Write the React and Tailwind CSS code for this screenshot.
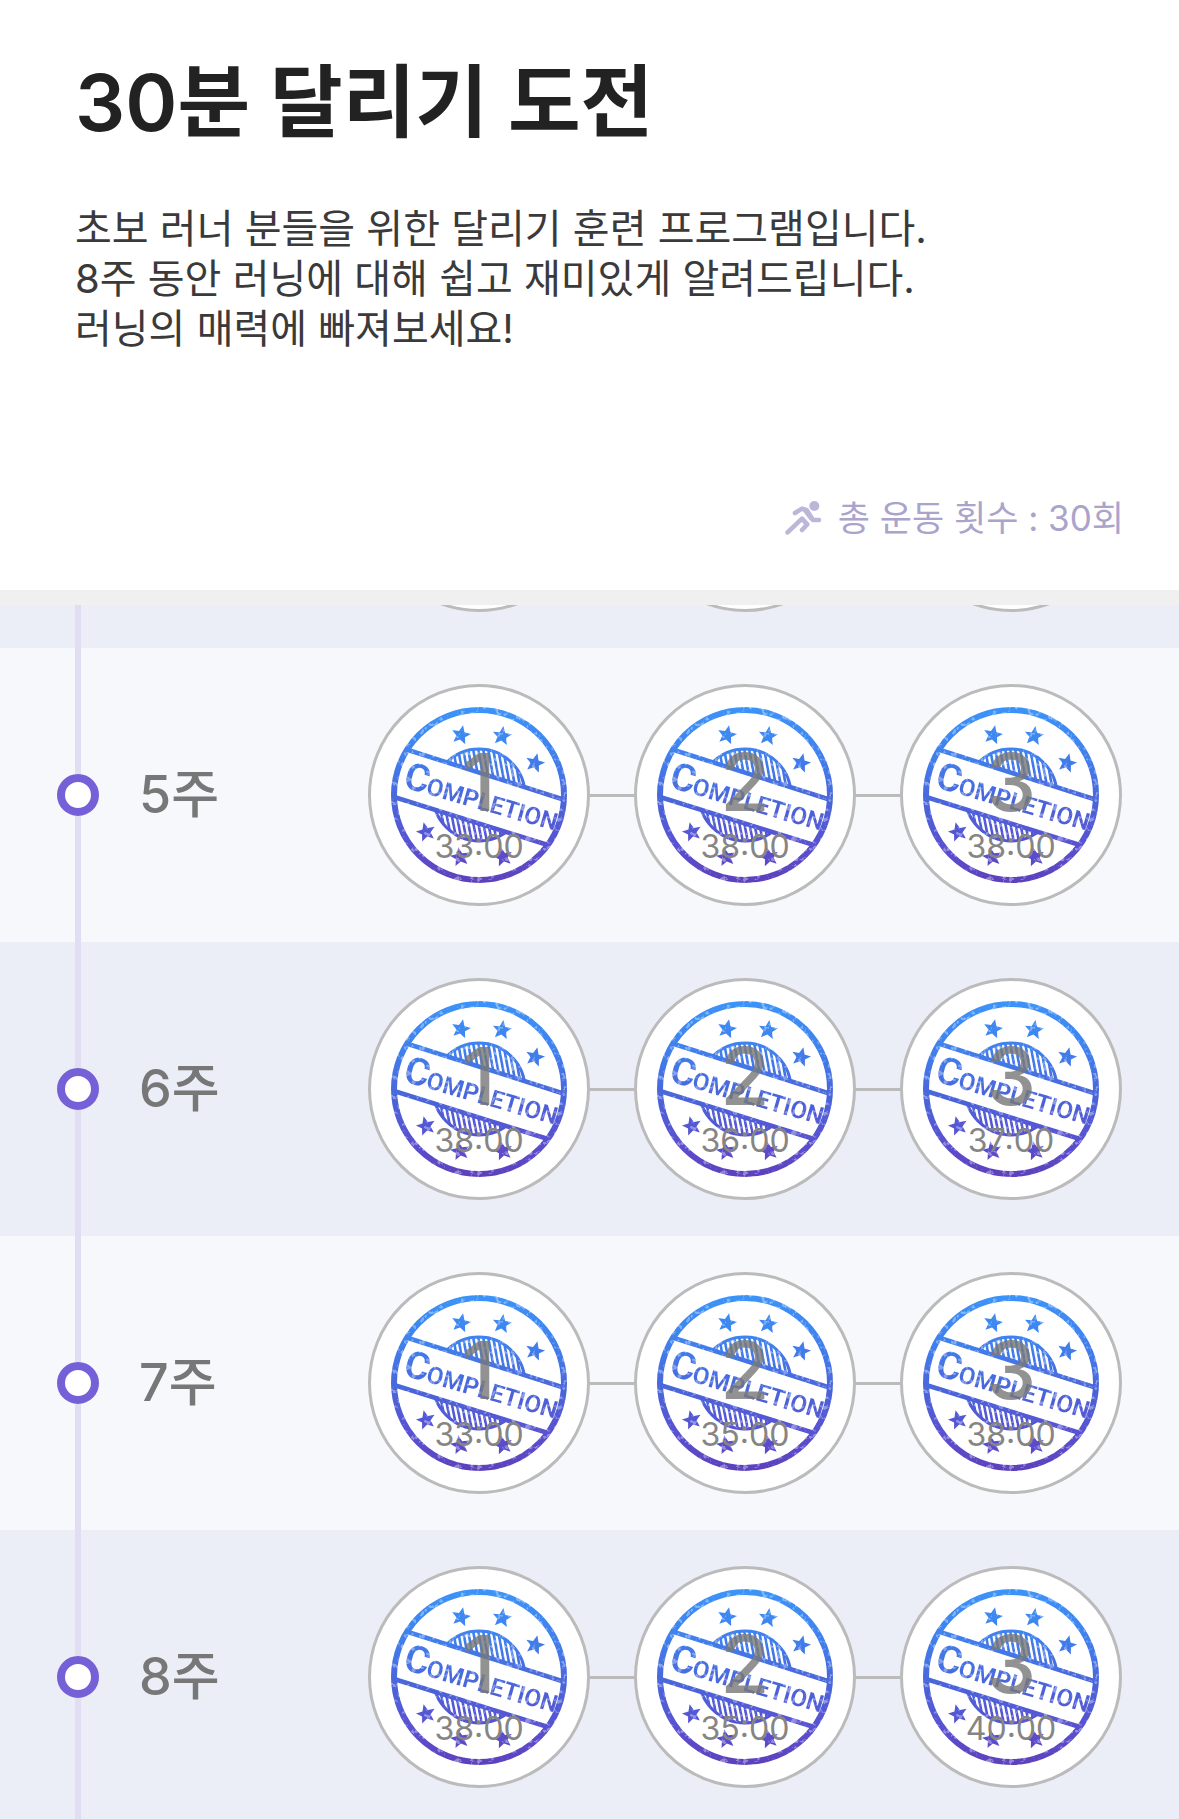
const weeks = [
  { week: 5, times: ['33:00', '38:00', '38:00'] },
  { week: 6, times: ['38:00', '36:00', '37:00'] },
  { week: 7, times: ['33:00', '35:00', '38:00'] },
  { week: 8, times: ['38:00', '35:00', '40:00'] },
];

const STAR = 'M0 -10 L2.8 -3.4 L9.6 -3 L4.4 1.4 L6 8.2 L0 4.6 L-6 8.2 L-4.4 1.4 L-9.6 -3 L-2.8 -3.4 Z';
const stars = [
  [70, 28, 12], [111, 29, 8], [144, 56, 14],
  [35, 125, -14], [69, 150, -10], [112, 150, -12],
];
const hatch = Array.from({ length: 20 }, (_, i) => 40 + i * 5);

function StampDefs() {
  return (
    <svg className="absolute h-0 w-0" aria-hidden="true">
      <defs>
        <linearGradient id="ink" gradientUnits="userSpaceOnUse" x1="0" y1="0" x2="0" y2="176">
          <stop offset="0" stopColor="#3b93f8" />
          <stop offset="0.25" stopColor="#3f82ee" />
          <stop offset="0.55" stopColor="#4a64da" />
          <stop offset="0.8" stopColor="#5a50d0" />
          <stop offset="1" stopColor="#5c40bc" />
        </linearGradient>
        <filter id="soften" x="0" y="0" width="1" height="1">
          <feGaussianBlur stdDeviation="0.7" />
        </filter>
        <filter id="wear" x="0" y="0" width="1" height="1">
          <feTurbulence type="fractalNoise" baseFrequency="0.2" numOctaves="3" seed="11" />
          <feColorMatrix values="0 0 0 0 0  0 0 0 0 0  0 0 0 0 0  8 0 0 0 -4.6" />
        </filter>
        <clipPath id="above"><path d="M0 37 L176 94 L176 0 L0 0Z" /></clipPath>
        <clipPath id="below"><path d="M0 89 L176 143 L176 176 L0 176Z" /></clipPath>
        <clipPath id="core"><circle cx="88" cy="88" r="46" /></clipPath>
        <mask id="inkMask" maskUnits="userSpaceOnUse" x="0" y="0" width="176" height="176">
          <g fill="none" stroke="white" strokeWidth="4.5">
            <circle cx="88" cy="88" r="85" strokeWidth="6" />
            <path d="M17 43 L174 93 M3 90 L157 138" />
            <g clipPath="url(#above)">
              <circle cx="88" cy="88" r="46" strokeWidth="3" />
              <g clipPath="url(#core)" strokeWidth="2.6">
                {hatch.map((x) => <path key={x} d={`M${x - 4} 36 L${x + 6} 90`} />)}
              </g>
            </g>
            <g clipPath="url(#below)">
              <circle cx="88" cy="88" r="46" strokeWidth="3" />
              <g clipPath="url(#core)" strokeWidth="2.6">
                {hatch.map((x) => <path key={x} d={`M${x - 8} 90 L${x + 2} 140`} />)}
              </g>
            </g>
          </g>
          {stars.map(([x, y, a]) => (
            <path key={`${x}-${y}`} d={STAR} fill="white" transform={`translate(${x} ${y}) rotate(${a})`} />
          ))}
          <g fill="white" transform="translate(11 80) rotate(16)" fontFamily="Roboto, sans-serif" fontWeight="600">
            <text x="0" y="0" fontSize="38">C</text>
            <text x="24" y="0" fontSize="24">OMPLETION</text>
          </g>
          <rect width="176" height="176" filter="url(#wear)" opacity="0.35" />
        </mask>
        <g id="stamp" filter="url(#soften)">
          <rect width="176" height="176" fill="url(#ink)" mask="url(#inkMask)" />
        </g>
      </defs>
    </svg>
  );
}

function Session({ number, time }) {
  return (
    <button
      type="button"
      className="relative flex size-[222px] shrink-0 flex-col items-center rounded-full border-3 border-[#bbbbbb] bg-white pt-[50px]"
    >
      <svg viewBox="0 0 176 176" className="absolute inset-5 size-[176px]" aria-hidden="true">
        <use href="#stamp" />
      </svg>
      <span className="relative text-[80px] leading-[90px] font-medium text-[#787878] opacity-80">{number}</span>
      <span className="relative mt-1 text-[32px] leading-8 text-[#858585]">{time}</span>
    </button>
  );
}

function WeekRow({ week, times }) {
  return (
    <li className="flex h-[294px] shrink-0 items-center px-[57px] odd:bg-[#ebeef6] even:bg-[#f7f8fc]">
      <div className="flex h-full w-[42px] flex-col items-center">
        <span className="w-[6px] grow bg-[#e1ddf3]" />
        <span className="size-[42px] rounded-full border-8 border-[#7660d8] bg-white" />
        <span className="w-[6px] grow bg-[#e1ddf3]" />
      </div>
      <h2 className="ml-10 text-[52px] font-medium text-[#777777]">{week}주</h2>
      <div className="ml-auto flex items-center">
        {times.map((time, i) => (
          <div key={i} className="flex items-center">
            {i > 0 && <span className="h-[3px] w-11 bg-[#bbbbbb]" />}
            <Session number={i + 1} time={time} />
          </div>
        ))}
      </div>
    </li>
  );
}

function RunnerIcon() {
  return (
    <svg viewBox="0 0 37 34" className="h-[34px] w-[37px]" fill="none" stroke="#bcb7d8" strokeWidth="4.6" strokeLinecap="round" strokeLinejoin="round" aria-hidden="true">
      <circle cx="29.3" cy="5" r="5" fill="#bcb7d8" stroke="none" />
      <path d="M10 12 L17 7.6 L21.8 9.2 L28 19 H34" />
      <path d="M20 9 L26 17" />
      <path d="M2.6 31.4 L17 17.6 L22.2 23.4 L17 29" />
    </svg>
  );
}

export default function App() {
  return (
    <main className="flex h-screen flex-col overflow-hidden bg-white font-[Inter,'Noto_Sans_CJK_KR',sans-serif]">
      <StampDefs />
      <header className="shrink-0 border-b-15 border-[#f0f0f0] pt-[52px] pr-[55px] pb-12 pl-[75px]">
        <h1 className="text-[79px] leading-[100px] font-semibold text-[#222222]">30분 달리기 도전</h1>
        <p className="mt-[52px] text-[40px] leading-[50px] text-[#3a3a3a]">
          초보 러너 분들을 위한 달리기 훈련 프로그램입니다.
          <br />
          8주 동안 러닝에 대해 쉽고 재미있게 알려드립니다.
          <br />
          러닝의 매력에 빠져보세요!
        </p>
        <p className="mt-[140px] flex items-center justify-end gap-4 text-[35px] leading-12 text-[#aaa4cb]">
          <RunnerIcon />
          총 운동 횟수 : 30회
        </p>
      </header>
      <ul className="flex min-h-0 grow flex-col overflow-hidden">
        <li className="flex h-[43px] shrink-0 items-end overflow-hidden bg-[#ebeef6] px-[57px]">
          <div className="flex h-full w-[42px] justify-center">
            <span className="w-[6px] bg-[#e1ddf3]" />
          </div>
          <div className="mb-9 ml-auto flex gap-11">
            {[1, 2, 3].map((n) => (
              <span key={n} className="size-[222px] rounded-full border-3 border-[#bbbbbb] bg-white" />
            ))}
          </div>
        </li>
        {weeks.map((w) => <WeekRow key={w.week} {...w} />)}
      </ul>
    </main>
  );
}
